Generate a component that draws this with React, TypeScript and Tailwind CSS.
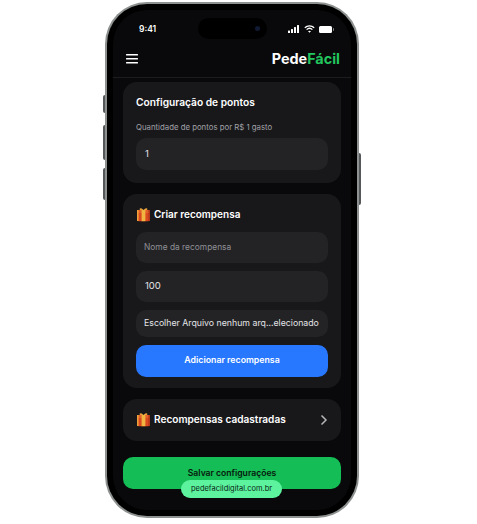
const font = { fontFamily: 'Inter, "Liberation Sans", sans-serif' }

function Gift() {
  return (
    <svg width="15" height="15" viewBox="0 0 15 15" className="shrink-0">
      <path d="M4 3 C2.5 .8 5.5 .3 7.5 3 C9.5 .3 12.5 .8 11 3 Z" fill="#e8a23a" />
      <rect x="1" y="3" width="13" height="3" rx=".6" fill="#e2602a" />
      <rect x="1.8" y="6" width="11.4" height="8.2" rx=".8" fill="#d9481f" />
      <rect x="5.6" y="3" width="3.8" height="11.2" fill="#f2b441" />
      <rect x="1" y="3" width="1.6" height="11" fill="#f0a03a" />
      <rect x="12.4" y="3" width="1.6" height="11" fill="#b5381a" />
    </svg>
  )
}

function Field({ text, dim, className }: { text: string; dim?: boolean; className: string }) {
  return (
    <div className={`flex items-center rounded-[10px] bg-[#232326] ${className} ${dim ? 'text-[#8f8f94]' : 'text-[#e4e4e6]'}`}>
      {text}
    </div>
  )
}

export default function App() {
  return (
    <div className="h-[524px] w-[477px] overflow-hidden bg-white pl-[105px] pt-[2px]" style={font}>
      <div className="relative h-[516px] w-[254px]">
        {/* side buttons */}
        <div className="absolute left-[-2px] top-[93px] h-[18px] w-[2px] rounded-l-sm bg-[#55585a]" />
        <div className="absolute left-[-2px] top-[123px] h-[35px] w-[2px] rounded-l-sm bg-[#55585a]" />
        <div className="absolute left-[-2px] top-[166px] h-[32px] w-[2px] rounded-l-sm bg-[#55585a]" />
        <div className="absolute right-[-2px] top-[151px] h-[52px] w-[2px] rounded-r-sm bg-[#55585a]" />

        <div className="h-full w-full rounded-[42px] bg-[#8d918f] p-[2px]">
          <div className="h-full w-full rounded-[40px] bg-[#000000] p-[6px]">
            <div className="relative flex h-full w-full flex-col overflow-hidden rounded-[34px] bg-[#09090b]">
              {/* status bar */}
              <div className="relative flex h-[42px] shrink-0 items-center justify-between pb-[4px] pl-[26px] pr-[17px] text-white">
                <span className="text-[8.5px] font-semibold">9:41</span>
                <div className="absolute left-[85px] top-[8px] flex h-[21px] w-[69px] items-center justify-end rounded-full bg-black pr-[7px]">
                  <div className="h-[5px] w-[5px] rounded-full bg-[#101a33]" />
                </div>
                <div className="flex items-center gap-[4px]">
                  <svg width="12" height="8" viewBox="0 0 12 8" fill="white">
                    <rect x="0" y="5.5" width="2" height="2.5" rx=".5" />
                    <rect x="3" y="4" width="2" height="4" rx=".5" />
                    <rect x="6" y="2" width="2" height="6" rx=".5" />
                    <rect x="9" y="0" width="2" height="8" rx=".5" />
                  </svg>
                  <svg width="11" height="8" viewBox="0 0 11 8" fill="none" stroke="white">
                    <path d="M.8 2.8 C3.5 .2 7.5 .2 10.2 2.8" strokeWidth="1.3" />
                    <path d="M2.6 4.6 C4.3 3 6.7 3 8.4 4.6" strokeWidth="1.3" />
                    <path d="M5.5 7.8 L4 6.2 C4.9 5.5 6.1 5.5 7 6.2 Z" fill="white" stroke="none" />
                  </svg>
                  <div className="flex items-center gap-[1px]">
                    <div className="h-[7px] w-[13px] rounded-[1.5px] bg-white" />
                    <div className="h-[3px] w-[1px] rounded-r-sm bg-[#8a8a8a]" />
                  </div>
                </div>
              </div>

              {/* header */}
              <div className="flex h-[26px] shrink-0 items-center justify-between border-b border-[#1c1c1f] pb-[12px] pl-[13px] pr-[11px]">
                <svg width="12" height="10" viewBox="0 0 12 10" fill="white">
                  <rect y="0" width="12" height="1.5" rx=".5" />
                  <rect y="4" width="12" height="1.5" rx=".5" />
                  <rect y="8" width="12" height="1.5" rx=".5" />
                </svg>
                <span className="text-[14.4px] font-bold text-white">
                  Pede<span className="text-[#22c55e]">Fácil</span>
                </span>
              </div>

              {/* content */}
              <div className="flex flex-col gap-[11px] px-[10px] pt-[4px]">
                <div className="rounded-[14px] bg-[#18181b] px-[13px] pb-[13px] pt-[14px]">
                  <h2 className="text-[10.2px] font-semibold leading-[13px] text-white">Configuração de pontos</h2>
                  <p className="mt-[12px] text-[7.8px] leading-[12px] text-[#a1a1a6]">Quantidade de pontos por R$ 1 gasto</p>
                  <Field text="1" className="mt-[5px] h-[32px] pl-[9px] text-[9.5px]" />
                </div>

                <div className="rounded-[14px] bg-[#18181b] px-[13px] pb-[11px] pt-[13px]">
                  <div className="flex h-[15px] items-center gap-[3px]">
                    <Gift />
                    <h2 className="text-[10px] font-semibold text-white">Criar recompensa</h2>
                  </div>
                  <div className="mt-[10px] flex flex-col gap-[8px]">
                    <Field text="Nome da recompensa" dim className="h-[31px] pl-[8px] text-[8.4px]" />
                    <Field text="100" className="h-[31px] pl-[9px] text-[9.5px]" />
                    <Field text="Escolher Arquivo nenhum arq...elecionado" className="h-[27px] whitespace-nowrap pl-[8px] text-[8.75px]" />
                    <button className="h-[32px] rounded-[10px] bg-[#2878ff] text-[8.75px] font-semibold text-white">Adicionar recompensa</button>
                  </div>
                </div>

                <div className="flex h-[42px] items-center justify-between rounded-[14px] bg-[#18181b] pl-[13px] pr-[13px]">
                  <div className="flex items-center gap-[3px]">
                    <Gift />
                    <span className="text-[10.1px] font-semibold text-white">Recompensas cadastradas</span>
                  </div>
                  <svg width="8" height="12" viewBox="0 0 8 12" fill="none" stroke="#b5b5b8" strokeWidth="1.5">
                    <path d="M1.5 1.5 L6 6 L1.5 10.5" />
                  </svg>
                </div>

                <button className="mt-[5px] h-[32px] rounded-[10px] bg-[#14bd55] text-[8.6px] font-semibold text-[#07170d]">Salvar configurações</button>
              </div>
            </div>
          </div>
        </div>

        {/* url pill */}
        <div className="absolute left-[76px] top-[478px] flex h-[18px] w-[101px] items-center justify-center rounded-full bg-[#5cf29e] text-[7.5px] text-[#0a2415]">
          pedefacildigital.com.br
        </div>
      </div>
    </div>
  )
}
